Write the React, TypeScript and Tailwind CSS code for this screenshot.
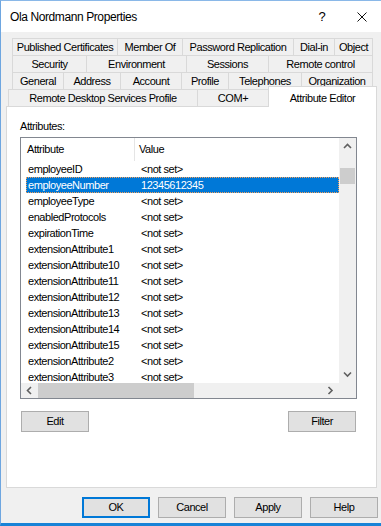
import React from "react";

const row1 = [
  { label: "Published Certificates", w: "w-[105px]" },
  { label: "Member Of", w: "w-[65px]" },
  { label: "Password Replication", w: "w-[111px]" },
  { label: "Dial-in", w: "w-[41px]" },
  { label: "Object", w: "w-[39px]" },
];
const row2 = [
  { label: "Security", w: "w-[74px]" },
  { label: "Environment", w: "w-[100px]" },
  { label: "Sessions", w: "w-[82px]" },
  { label: "Remote control", w: "w-[105px]" },
];
const row3 = [
  { label: "General", w: "w-[51px]" },
  { label: "Address", w: "w-[57px]" },
  { label: "Account", w: "w-[61px]" },
  { label: "Profile", w: "w-[47px]" },
  { label: "Telephones", w: "w-[73px]" },
  { label: "Organization", w: "w-[72px]" },
];

const items: [string, string][] = [
  ["employeeID", "<not set>"],
  ["employeeNumber", "12345612345"],
  ["employeeType", "<not set>"],
  ["enabledProtocols", "<not set>"],
  ["expirationTime", "<not set>"],
  ["extensionAttribute1", "<not set>"],
  ["extensionAttribute10", "<not set>"],
  ["extensionAttribute11", "<not set>"],
  ["extensionAttribute12", "<not set>"],
  ["extensionAttribute13", "<not set>"],
  ["extensionAttribute14", "<not set>"],
  ["extensionAttribute15", "<not set>"],
  ["extensionAttribute2", "<not set>"],
  ["extensionAttribute3", "<not set>"],
];

function TabRow({ tabs }: { tabs: { label: string; w: string }[] }) {
  return (
    <div className="flex h-[17px] ml-[11px]">
      {tabs.map((t, i) => (
        <div
          key={t.label}
          className={`${t.w} h-full flex items-center justify-center border-l border-t border-[#d9d9d9] whitespace-nowrap ${
            i === tabs.length - 1 ? "border-r" : ""
          }`}
        >
          {t.label}
        </div>
      ))}
    </div>
  );
}

function Chevron({ dir }: { dir: "up" | "down" | "left" | "right" }) {
  const pts = {
    up: "1,5 4.5,1.5 8,5",
    down: "1,1.5 4.5,5 8,1.5",
    left: "5,1 1.5,4.5 5,8",
    right: "1.5,1 5,4.5 1.5,8",
  }[dir];
  const vertical = dir === "up" || dir === "down";
  return (
    <svg
      width={vertical ? 9 : 7}
      height={vertical ? 7 : 9}
      viewBox={vertical ? "0 0 9 7" : "0 0 7 9"}
    >
      <polyline points={pts} fill="none" stroke="#606060" strokeWidth="1.6" />
    </svg>
  );
}

function Btn({ label, def }: { label: string; def?: boolean }) {
  return (
    <div
      className={`w-[68px] h-[21px] flex items-center justify-center bg-[#e1e1e1] ${
        def ? "border-2 border-[#0078d7]" : "border border-[#adadad]"
      }`}
    >
      {label}
    </div>
  );
}

export default function App() {
  return (
    <div className="w-[381px] h-[526px] overflow-hidden flex flex-col bg-[#f0f0f0] border-l border-l-[#6ea6e0] border-t border-t-[#8ab8e8] border-b-[3px] border-b-[#1883d7] text-[11px] tracking-[-0.45px] text-black font-['Liberation_Sans',Arial,sans-serif]">
      {/* Title bar */}
      <div className="h-[31px] bg-white flex items-center shrink-0">
        <div className="flex-1 pl-[9px] text-[12px] tracking-[-0.4px]">Ola Nordmann Properties</div>
        <div className="w-[12px] text-center text-[13px]">?</div>
        <div className="w-[29px]" />
        <svg width="10" height="10" viewBox="0 0 10 10">
          <path d="M0.5 0.5 L9.5 9.5 M9.5 0.5 L0.5 9.5" stroke="#111" strokeWidth="1" />
        </svg>
        <div className="w-[14px]" />
      </div>

      {/* Body */}
      <div className="flex-1 flex flex-col pt-[6px]">
        <TabRow tabs={row1} />
        <TabRow tabs={row2} />
        <TabRow tabs={row3} />
        <div className="flex h-[17px] ml-[7px] items-end">
          <div className="w-[189px] h-full flex items-center justify-center border-l border-t border-[#d9d9d9] whitespace-nowrap">
            Remote Desktop Services Profile
          </div>
          <div className="w-[71px] h-full flex items-center justify-center border-l border-t border-[#d9d9d9]">
            COM+
          </div>
          <div className="relative z-10 w-[109px] h-[21px] -mb-px bg-white flex items-start pt-[3px] justify-center border-l border-t border-r border-[#d9d9d9] whitespace-nowrap">
            Attribute Editor
          </div>
        </div>

        {/* Panel */}
        <div className="ml-[5px] w-[371px] h-[382px] bg-white border border-[#d9d9d9] pl-[13px] pt-[12px] flex flex-col">
          <div className="h-[14px] leading-[14px]">Attributes:</div>
          <div className="mt-[4px] w-[337px] h-[262px] border border-[#828790] flex flex-col">
            <div className="flex h-[245px]">
              <div className="flex-1 overflow-hidden flex flex-col">
                <div className="h-[23px] flex shrink-0">
                  <div className="w-[114px] pl-[6px] flex items-center border-r border-[#e5e5e5]">Attribute</div>
                  <div className="pl-[4px] flex items-center">Value</div>
                </div>
                {items.map(([a, v], i) => {
                  const sel = i === 1;
                  return (
                    <div
                      key={a}
                      className={`ml-[5px] h-[16px] flex items-center shrink-0 whitespace-nowrap ${
                        sel
                          ? "bg-[#0078d7] text-white border border-dotted border-[#f5a05a]"
                          : "border border-transparent"
                      }`}
                    >
                      <div className="w-[113px] pl-[1px]">{a}</div>
                      <div className="pl-[1px]">{v}</div>
                    </div>
                  );
                })}
              </div>
              <div className="w-[17px] bg-[#f0f0f0] flex flex-col">
                <div className="h-[17px] flex items-center justify-center">
                  <Chevron dir="up" />
                </div>
                <div className="flex-1 pt-[13px] px-[1px]">
                  <div className="h-[16px] bg-[#cdcdcd]" />
                </div>
                <div className="h-[17px] flex items-center justify-center">
                  <Chevron dir="down" />
                </div>
              </div>
            </div>
            <div className="flex h-[15px]">
              <div className="flex-1 bg-[#f0f0f0] flex">
                <div className="w-[17px] flex items-center justify-center">
                  <Chevron dir="left" />
                </div>
                <div className="flex-1 flex">
                  <div className="w-[156px] bg-[#cdcdcd]" />
                </div>
                <div className="w-[17px] flex items-center justify-center">
                  <Chevron dir="right" />
                </div>
              </div>
              <div className="w-[17px] bg-[#f0f0f0]" />
            </div>
          </div>
          <div className="mt-[12px] ml-[1px] w-[335px] flex justify-between">
            <Btn label="Edit" />
            <Btn label="Filter" />
          </div>
        </div>

        <div className="mt-[9px] flex justify-end gap-[8px] pr-[3px]">
          <Btn label="OK" def />
          <Btn label="Cancel" />
          <Btn label="Apply" />
          <Btn label="Help" />
        </div>
      </div>
    </div>
  );
}
